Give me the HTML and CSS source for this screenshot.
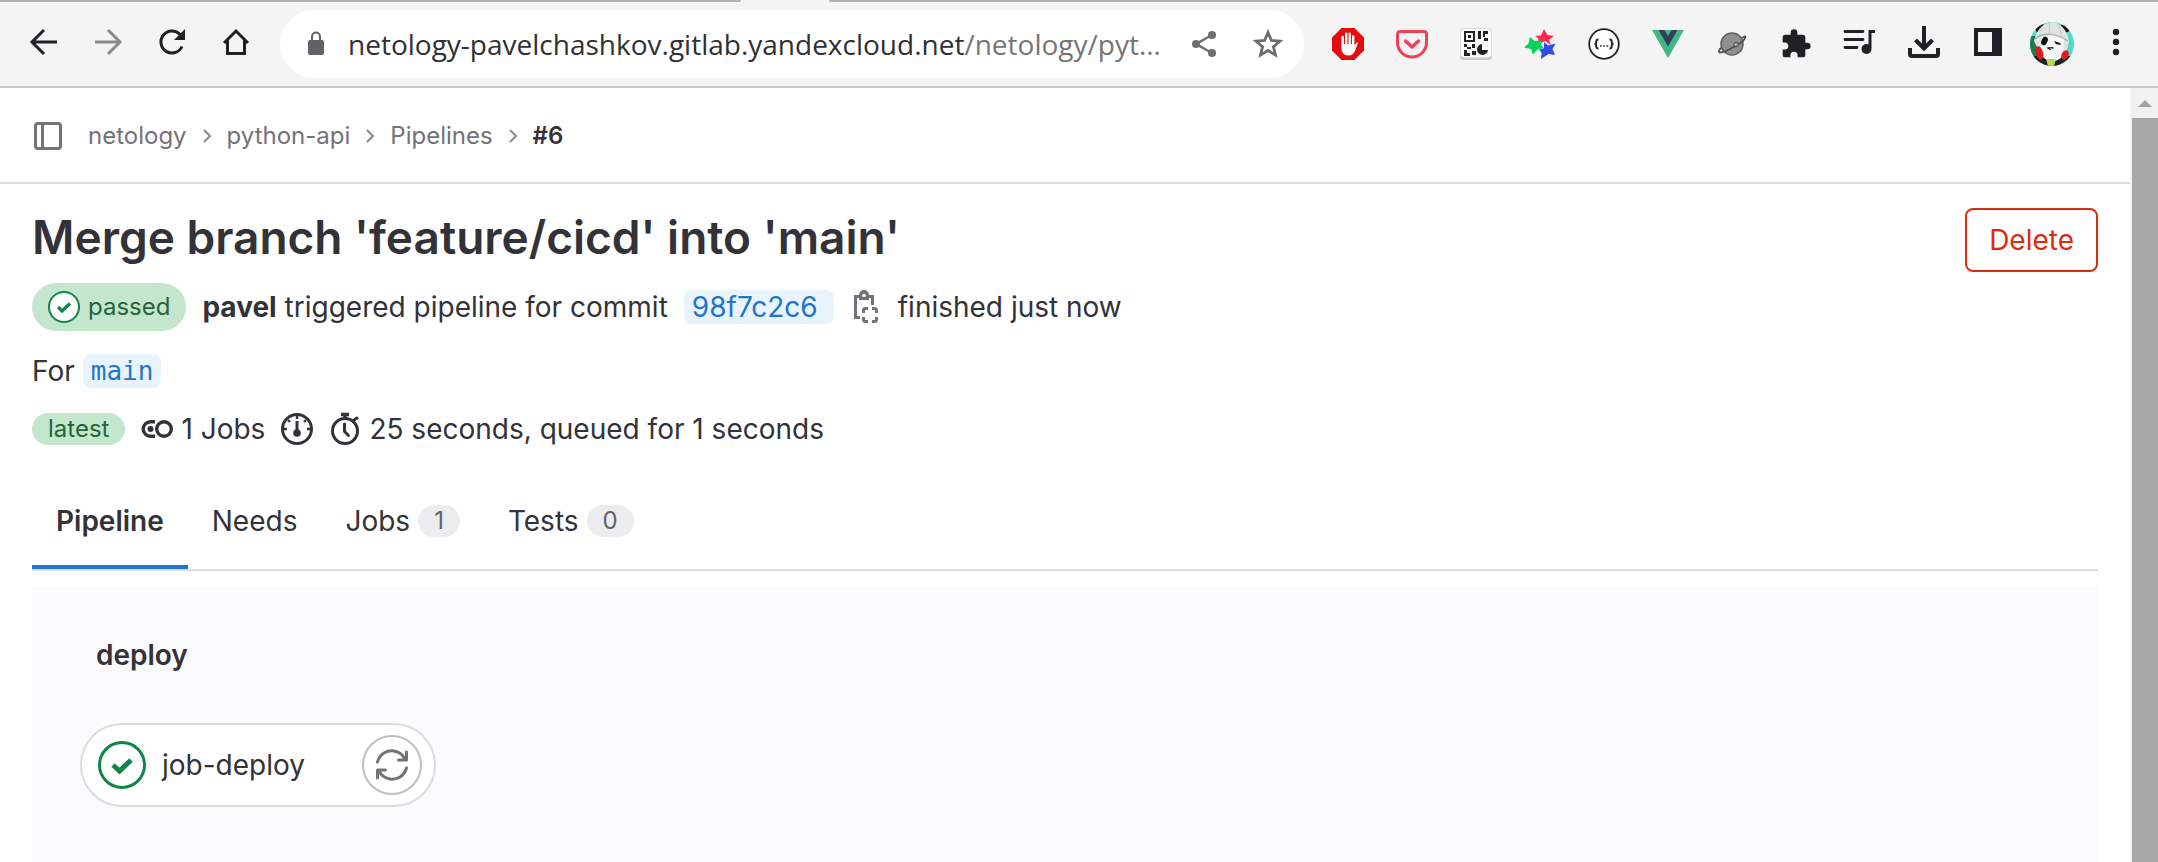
FILE: index.html
```html
<!DOCTYPE html>
<html lang="en">
<head>
<meta charset="utf-8">
<title>Pipeline #6 · netology / python-api</title>
<link rel="stylesheet" href="styles.css">
</head>
<body>
<header class="browser">
  <div class="tab-edge"><span class="tab-edge-left"></span><span class="tab-edge-right"></span></div>
  <div class="toolbar">
    <nav class="nav-buttons" aria-label="Browser navigation">
      <button class="tool" aria-label="Back"><svg viewBox="0 0 32 32" fill="none" stroke="#202124" stroke-width="3"><path d="M29 16H4M16 4 4 16l12 12"/></svg></button>
      <button class="tool" aria-label="Forward"><svg viewBox="0 0 32 32" fill="none" stroke="#8a8a8a" stroke-width="3"><path d="M3 16h25M16 4l12 12-12 12"/></svg></button>
      <button class="tool" aria-label="Reload"><svg viewBox="0 0 32 32"><path d="M26 20.500A11 11 0 1 1 24 8.500" fill="none" stroke="#202124" stroke-width="3"/><path d="M29 3v11H18z" fill="#202124"/></svg></button>
      <button class="tool" aria-label="Home"><svg viewBox="0 0 32 32" fill="none" stroke="#202124" stroke-width="3"><path d="M4 17 16 5l12 12M7.500 14v13.500h17V14"/></svg></button>
    </nav>
    <div class="address">
      <svg class="lock" viewBox="0 0 16 22"><path d="M4 9V3.500a4 4 0 0 1 8 0V9" fill="none" stroke="#5f6368" stroke-width="2"/><rect y="7" width="16" height="15" rx="2" fill="#5f6368"/></svg>
      <div class="url">netology-pavelchashkov.gitlab.yandexcloud.net<span class="path">/netology/pyt…</span></div>
      <div class="address-actions">
        <button class="tool" aria-label="Share"><svg viewBox="0 0 32 32" fill="#6e6e6e"><path d="M24 7 8 16l16 9" fill="none" stroke="#6e6e6e" stroke-width="2.500"/><circle cx="24" cy="7" r="4"/><circle cx="8" cy="16" r="4"/><circle cx="24" cy="25" r="4"/></svg></button>
        <button class="tool" aria-label="Bookmark"><svg viewBox="0 0 32 32" fill="none" stroke="#6e6e6e" stroke-width="2.800"><path d="m16 4.500 3.300 7.900 8.700.700-6.600 5.600 2.100 8.400-7.500-4.600-7.500 4.600 2.100-8.400L4 13.100l8.700-.700z"/></svg></button>
      </div>
    </div>
    <div class="extensions">
      <button class="tool" aria-label="Ad blocker"><svg viewBox="0 0 32 32"><path d="M9.500 0h13L32 9.500v13L22.500 32h-13L0 22.500v-13z" fill="#e40d0d"/><path d="M10.700 9v10M14.200 5.800v12M17.700 5.800v12M21.200 8.500v10" stroke="#fff" stroke-width="2.400" stroke-linecap="round"/><path d="M9.500 16h12.900l.300 1.500 1.500-2.500c1-.900 1.900-.500 1.600.600L23 23c-1.700 3.300-3.500 4.500-6.500 4.500-4.500 0-7-2.800-7-7z" fill="#fff"/></svg></button>
      <button class="tool" aria-label="Save to Pocket"><svg viewBox="0 0 32 32" fill="none" stroke="#ef4056" stroke-linecap="round" stroke-linejoin="round"><path d="M4 3.500h24a2.500 2.500 0 0 1 2.500 2.500v8.500a14.500 14.500 0 0 1-29 0V6A2.500 2.500 0 0 1 4 3.500z" stroke-width="3"/><path d="m9.500 13 6.500 6 6.500-6" stroke-width="3.400"/></svg></button>
      <button class="tool" aria-label="QR code"><svg viewBox="0 0 32 32"><rect y="1" width="32" height="31" rx="3" fill="#c9c9c9"/><rect x=".500" y=".500" width="31" height="29" rx="3" fill="#fafafa" stroke="#ddd"/><g fill="#222"><path d="M4 3h11v11H4zM6 5v7h7V5z" fill-rule="evenodd"/><path d="M8 7h3v3H8zM18 3h3v8h-3zM23 3h5v3h-3v3h-2zM24 10h4v3h-4zM4 16h3v3H4zM7 19h4v2H7zM12 16h3v4h-3zM4 22h3v3h3v3H4zM12 23h4v4h-4z"/><path d="M22 16v6h6a5.500 5.500 0 1 1-6-6z"/></g></svg></button>
      <button class="tool" aria-label="Stars"><svg viewBox="0 0 32 32"><path d="m20 1 3.500 6 6.500 1-5 4 2 5-6-4-8 4 1.500-6.500L11 8l6-.500z" fill="#ff2850"/><path d="m6 9 4.500 4 6.500-.500V17l3.500 3.500-6.500.500-5 5.500-2-5.500-7-1.500 4.500-4z" fill="#04d361"/><path d="m20 14 4 3.500 7.500-2-3 5.500 2.500 6-6.500-1-7.500 5 .500-6.500-2.500-3 5-1z" fill="#2c4fea"/></svg></button>
      <button class="tool" aria-label="JSON viewer"><svg viewBox="0 0 32 32" fill="none" stroke="#222"><circle cx="16" cy="16" r="14.800" fill="#fff" stroke-width="1.800"/><path d="M10.500 11.500c-2 0-2.200.500-2.200 2.200 0 1.500-.300 2.300-1.800 2.300 1.500 0 1.800.800 1.800 2.300 0 1.700.200 2.200 2.200 2.200M21.500 11.500c2 0 2.200.500 2.200 2.200 0 1.500.300 2.300 1.800 2.300-1.500 0-1.800.800-1.800 2.300 0 1.700-.200 2.200-2.200 2.200" stroke-width="2"/><path d="M12 18h1.600M15.300 18h1.600M18.600 18h1.600" stroke-width="1.600"/></svg></button>
      <button class="tool" aria-label="Vue devtools"><svg viewBox="0 0 32 32"><path d="M0 2h32L16 30z" fill="#41b883"/><path d="M6.500 2h6L16 8l3.500-6h6L16 18.500z" fill="#2f3f5c"/></svg></button>
      <button class="tool" aria-label="Planet"><svg viewBox="0 0 32 32"><circle cx="16" cy="16" r="11" fill="#8f8f8f" stroke="#606060" stroke-width="1.500"/><path d="M26 10c3-2.500 4.500-2 2.500 1-2.500 3.500-6 5-10 7.500-5 3-11 6-14.500 6-2.500-.500 0-4 2-5" fill="none" stroke="#4c4c4c" stroke-width="1.800"/><circle cx="20" cy="16.500" r="2.300" fill="#aaa" stroke="#444"/></svg></button>
      <button class="tool" aria-label="Extensions"><svg viewBox="0 0 24 24" fill="#202124"><path d="M20.500 11H19V7a2 2 0 0 0-2-2h-4V3.500a2.500 2.500 0 0 0-5 0V5H4a2 2 0 0 0-2 2v3.800h1.500a2.700 2.700 0 0 1 0 5.400H2V20a2 2 0 0 0 2 2h3.800v-1.500a2.700 2.700 0 0 1 5.400 0V22H17a2 2 0 0 0 2-2v-4h1.500a2.500 2.500 0 0 0 0-5z"/></svg></button>
      <button class="tool" aria-label="Media"><svg viewBox="0 0 32 32"><path d="M1 3.500h18M1 11.500h18M1 19.500h12" stroke="#202124" stroke-width="2.800" stroke-linecap="round"/><path d="M31 3.500h-5V20" fill="none" stroke="#202124" stroke-width="3"/><circle cx="22.500" cy="21" r="5" fill="#202124"/></svg></button>
      <button class="tool" aria-label="Downloads"><svg viewBox="0 0 32 32" fill="none" stroke="#202124" stroke-width="4"><path d="M16-2v20M7.500 12l8.500 8.500 8.500-8.500M2 20v6a2 2 0 0 0 2 2h24a2 2 0 0 0 2-2v-6"/></svg></button>
      <button class="tool" aria-label="Side panel"><svg viewBox="0 0 32 32"><path d="M2 0h28v28H2zM6 4v20h14V4z" fill="#202124" fill-rule="evenodd"/></svg></button>
      <button class="tool profile" aria-label="Profile"><svg viewBox="0 0 44 44"><clipPath id="face"><circle cx="22" cy="22" r="22"/></clipPath><g clip-path="url(#face)"><path d="M0 0h44v44H0z" fill="#4fdcc8"/><path d="M0 14h12v30H0z" fill="#1d7a52"/><path d="M4 34h36v10H4z" fill="#17201e"/><ellipse cx="10" cy="6" rx="5" ry="4" fill="#151515" transform="rotate(-30 10 6)"/><ellipse cx="35" cy="6" rx="5" ry="4" fill="#151515" transform="rotate(30 35 6)"/><path d="M4 19C7 6 14 1 22 0c9 0 15 9 17 19l-3 13-24 3z" fill="#dfe3e2"/><path d="M20 0c-1 5-1 8 0 12M28 2c2 4 3 7 3 11" stroke="#c3c9c7" fill="none"/><path d="M11 15c7-3 17-3 23 2l-1 16c-4 8-17 8-21 0z" fill="#f6f6f6"/><path d="M5 17c8-7 21-6 33 2" stroke="#a9b0ae" stroke-width="1.500" fill="none"/><ellipse cx="14.500" cy="19" rx="3" ry="4.500" fill="#111" transform="rotate(25 14.500 19)"/><path d="m24 19 6 2 1 2-5-1z" fill="#111"/><path d="M18 25h6l-3 2zM16 25.500l4 2.500 4-2" fill="#111"/><ellipse cx="9.500" cy="31" rx="3.500" ry="7" fill="#df1c1c" transform="rotate(-15 9.500 31)"/><ellipse cx="35" cy="33" rx="3.500" ry="5" fill="#df1c1c" transform="rotate(25 35 33)"/><path d="M16 37h10l-2 7h-6z" fill="#b9d65a"/></g></svg></button>
      <button class="tool" aria-label="Menu"><svg viewBox="0 0 32 32" fill="#202124"><circle cx="16" cy="4" r="3.200"/><circle cx="16" cy="14" r="3.200"/><circle cx="16" cy="24" r="3.200"/></svg></button>
    </div>
  </div>
</header>
<div class="viewport">
  <div class="page">
    <div class="topbar">
      <button class="icon-button" aria-label="Toggle sidebar"><svg viewBox="0 0 28 28" fill="none" stroke="#737278" stroke-width="3"><rect x="1.500" y="1.500" width="25" height="25" rx="2.500"/><path d="M8.500 2v24"/></svg></button>
      <nav aria-label="Breadcrumbs">
        <ol class="crumbs">
          <li><a href="#">netology</a></li>
          <li><svg class="chevron" viewBox="0 0 8 14"><path d="m1 1 6 6-6 6"/></svg><a href="#">python-api</a></li>
          <li><svg class="chevron" viewBox="0 0 8 14"><path d="m1 1 6 6-6 6"/></svg><a href="#">Pipelines</a></li>
          <li><svg class="chevron" viewBox="0 0 8 14"><path d="m1 1 6 6-6 6"/></svg><a class="current" href="#">#6</a></li>
        </ol>
      </nav>
    </div>
    <main class="content">
      <div class="heading">
        <div class="summary">
          <h1>Merge branch 'feature/cicd' into 'main'</h1>
          <div class="row commit-row">
            <a class="status" href="#"><svg viewBox="0 0 32 32"><circle cx="16" cy="16" r="15" fill="#fff" stroke="#108548" stroke-width="2"/><path d="m10 16 4 4 8-7.500" fill="none" stroke="#108548" stroke-width="3.200"/></svg>passed</a>
            <span><strong>pavel</strong> triggered pipeline for commit</span>
            <a class="sha" href="#">98f7c2c6</a>
            <button class="icon-button copy" aria-label="Copy commit SHA"><svg viewBox="0 0 24 32" fill="none" stroke="#737278" stroke-width="3"><path d="M6 26.500H1.500V5.500H6M14 5.500h4.500V14"/><path d="M5 4a5 5 0 0 1 10 0v5H5z" fill="#737278" stroke="none"/><circle cx="10" cy="4.500" r="1.800" fill="#fff" stroke="none"/><path d="M9.500 22v-2.500a2 2 0 0 1 2-2H14M18 17.500h2.500a2 2 0 0 1 2 2V22M22.500 26v2.500a2 2 0 0 1-2 2H18M14 30.500h-2.500a2 2 0 0 1-2-2V26"/></svg></button>
            <span>finished just now</span>
          </div>
          <div class="row ref-row">For <a class="ref" href="#">main</a></div>
          <div class="row stats-row">
            <span class="label">latest</span>
            <span class="stat"><svg viewBox="0 0 32 32" fill="none" stroke="#333238" stroke-width="3.400"><circle cx="23" cy="16" r="7.300"/><path d="M14 8.700h-4.500a7.300 7.300 0 0 0 0 14.600H14"/><circle cx="9.500" cy="16" r="3" fill="#333238" stroke="none"/></svg>1 Jobs</span>
            <svg class="gauge" viewBox="0 0 32 32" fill="none" stroke="#333238" stroke-width="3"><circle cx="16" cy="16" r="14.500"/><path d="M16 8v12" /><circle cx="16" cy="20" r="3.800" fill="#333238" stroke="none"/><path d="M16 2v4M2 16h4M26 16h4M7 7l2 2M25 7l-2 2" stroke-width="2.400"/></svg>
            <span class="stat"><svg viewBox="0 0 32 32" fill="none" stroke="#333238" stroke-width="3"><circle cx="16" cy="18" r="12.500"/><path d="M15.500 11v7.500l4 4M25 7l3-2" stroke-linecap="round"/><path d="M12 1.500h8M16 1v5" stroke-width="3.400"/></svg>25 seconds, queued for 1 seconds</span>
          </div>
        </div>
        <button class="delete">Delete</button>
      </div>
      <nav class="tabs" aria-label="Pipeline views">
        <a class="tab active" href="#">Pipeline</a>
        <a class="tab" href="#">Needs</a>
        <a class="tab" href="#">Jobs <span class="count">1</span></a>
        <a class="tab" href="#">Tests <span class="count">0</span></a>
      </nav>
      <section class="graph">
        <h2>deploy</h2>
        <div class="job">
          <svg class="job-status" viewBox="0 0 48 48" fill="none" stroke="#108548"><circle cx="24" cy="24" r="22.500" stroke-width="3"/><path d="m15 24 6.500 6L33 19" stroke-width="5"/></svg>
          <a class="job-name" href="#">job-deploy</a>
          <button class="retry" aria-label="Run again"><svg viewBox="0 0 32 32" fill="none" stroke="#737278" stroke-width="3" stroke-linecap="round" stroke-linejoin="round"><path d="M1.500 13C4 4 12 1 18 2c6 1 9.500 4.500 11 8.500M30.500 3v8h-8M30.500 19C28 28 20 31 14 30c-6-1-9.500-4.500-11-8.500M1.500 29v-8h8"/></svg></button>
        </div>
      </section>
    </main>
  </div>
  <div class="scrollbar"><svg class="scroll-up" viewBox="0 0 14 7"><path d="M0 7 7 0l7 7z"/></svg><div class="thumb"></div></div>
</div>
</body>
</html>
```
FILE: styles.css
```css
* { box-sizing: border-box; }
html, body { height: 100%; margin: 0; }
body {
  display: flex;
  flex-direction: column;
  background: #fff;
  color: #333238;
  font: 28px/40px Inter, "Noto Sans", sans-serif;
}
a { color: inherit; text-decoration: none; }
button { padding: 0; border: 0; background: none; color: inherit; font: inherit; cursor: pointer; }
svg { display: block; overflow: visible; flex: none; }

/* Browser chrome */
.browser { flex: none; background: #f4f4f4; border-bottom: 2px solid #c8c8c8; }
.tab-edge { display: flex; gap: 88px; height: 2px; }
.tab-edge-left { flex: 0 0 741px; background: #b0b0b0; border-radius: 0 0 4px 0; }
.tab-edge-right { flex: 1; background: #b0b0b0; border-radius: 0 0 0 4px; }
.tool { flex: none; width: 32px; height: 32px; }
.tool svg { width: 32px; height: 32px; }
.toolbar { display: flex; align-items: center; height: 84px; padding: 0 26px 0 28px; }
.nav-buttons { display: flex; gap: 32px; margin-right: 28px; padding-bottom: 4px; }
.address { display: flex; flex: 1; align-items: center; min-width: 0; height: 68px; margin-right: 28px; padding: 0 20px 0 28px; border-radius: 34px; background: #fff; }
.lock { width: 16px; height: 22px; margin-right: 24px; }
.url { flex: 1; min-width: 0; overflow: hidden; color: #303030; font: 28px/40px "Open Sans", "Noto Sans", sans-serif; white-space: nowrap; }
.path { color: #757575; }
.address-actions { display: flex; gap: 32px; }
.extensions { display: flex; align-items: center; gap: 32px; }
.profile, .profile svg { width: 44px; height: 44px; }
.profile { margin: 0 -6px; }

/* Page frame */
.viewport { display: flex; flex: 1; }
.page { display: flex; flex: 1; flex-direction: column; min-width: 0; }
.scrollbar { display: flex; flex: 0 0 28px; flex-direction: column; padding-left: 2px; background: #f1f1f1; }
.scroll-up { width: 14px; height: 7px; margin: 12px 6px 11px; fill: #a3a3a3; }
.thumb { flex: 1; background: #a8a8a8; }

.topbar { display: flex; align-items: center; gap: 26px; height: 96px; padding: 2px 34px 0; border-bottom: 2px solid #dcdcde; }
.topbar .icon-button, .topbar .icon-button svg { width: 28px; height: 28px; }
.crumbs { display: flex; margin: 0; padding: 0; color: #737278; font-size: 24px; line-height: 32px; list-style: none; }
.crumbs li { display: flex; align-items: center; }
.chevron { width: 8px; height: 14px; margin: 0 16px; fill: none; stroke: #89888d; stroke-width: 2; }
.current { color: #333238; font-weight: 600; }

/* Pipeline header */
.content { display: flex; flex: 1; flex-direction: column; padding: 24px 32px 0; }
.heading { display: flex; justify-content: space-between; align-items: flex-start; }
h1 { margin: 0; font-size: 46px; line-height: 58px; font-weight: 600; }
.row { display: flex; align-items: center; }
.commit-row { margin-top: 17px; height: 48px; gap: 16px; }
.status { display: flex; align-items: center; gap: 8px; height: 48px; padding: 0 16px; border-radius: 24px; background: #c3e6cd; color: #24663b; font-size: 24px; }
.status svg { width: 32px; height: 32px; }
.sha, .ref { border-radius: 8px; background: #e9f3fc; color: #1f75cb; line-height: 34px; }
.sha { padding: 0 16px 0 8px; }
.copy { margin: 0 4px; }
.copy svg { width: 24px; height: 32px; }
.ref-row { height: 40px; margin-top: 20px; gap: 8px; }
.ref { padding: 0 8px; font-family: "DejaVu Sans Mono", monospace; font-size: 26px; }
.stats-row { height: 40px; margin-top: 18px; gap: 16px; }
.label { padding: 0 16px; border-radius: 16px; background: #c3e6cd; color: #24663b; font-size: 24px; line-height: 32px; }
.stat { display: flex; align-items: center; gap: 8px; }
.stat svg, .gauge { width: 32px; height: 32px; }
.delete { height: 64px; padding: 0 22px; border: 2px solid #dd2b0e; border-radius: 8px; color: #dd2b0e; }

/* Tabs */
.tabs { display: flex; margin-top: 24px; border-bottom: 2px solid #dcdcde; }
.tab { display: flex; align-items: center; gap: 8px; padding: 32px 24px 28px; border-bottom: 4px solid transparent; line-height: 32px; }
.active { border-color: #1f75cb; font-weight: 600; }
.count { padding: 0 16px; border-radius: 16px; background: #ececef; color: #626168; font-size: 24px; }

/* Stage graph */
.graph { flex: 1; margin-top: 16px; padding: 48px; background: #fbfafd; }
h2 { margin: 0 0 48px; padding-left: 16px; font-size: 28px; line-height: 40px; font-weight: 600; }
.job { display: flex; align-items: center; width: 356px; height: 84px; padding: 0 12px 0 16px; border: 2px solid #dcdcde; border-radius: 42px; background: #fff; }
.job-status { width: 48px; height: 48px; margin-right: 16px; }
.job-name { flex: 1; }
.retry { display: grid; place-items: center; width: 60px; height: 60px; border: 2px solid #bfbfc3; border-radius: 50%; }
.retry svg { width: 32px; height: 32px; }
```
